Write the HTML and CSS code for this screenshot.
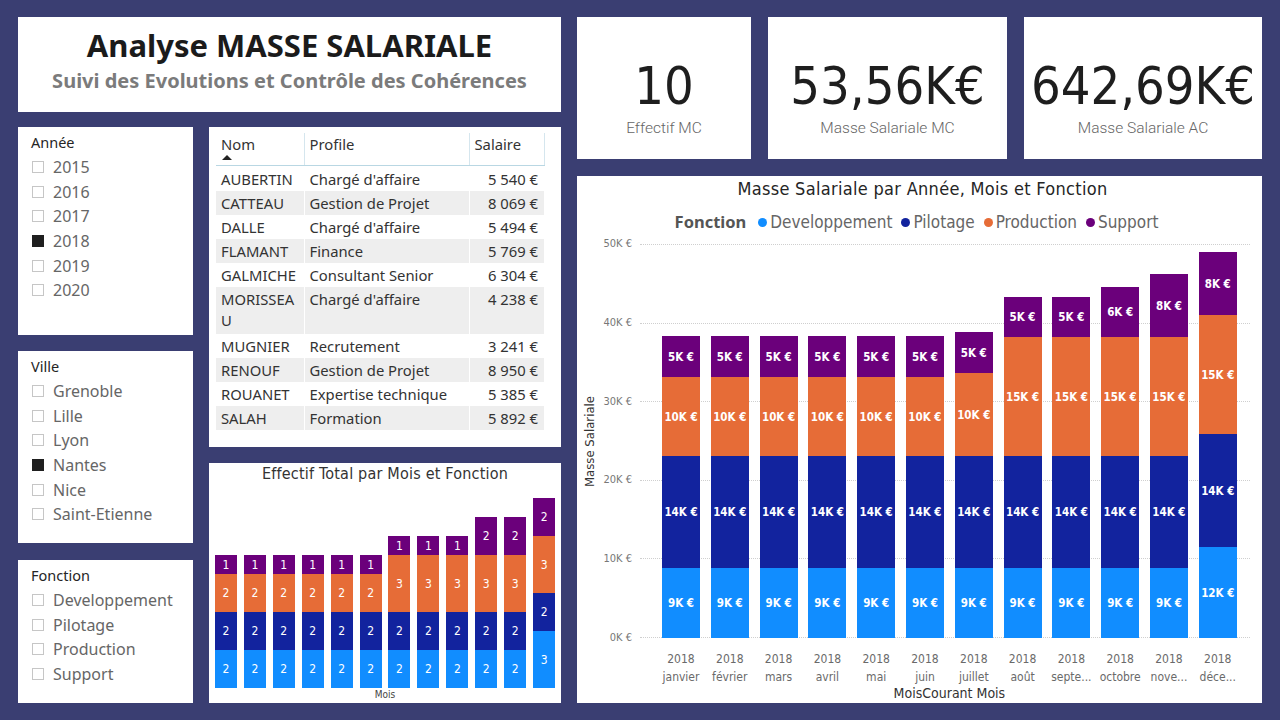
FILE: index.html
```html
<!DOCTYPE html>
<html lang="fr">
<head>
<meta charset="utf-8">
<title>Analyse MASSE SALARIALE</title>
<link rel="stylesheet" href="styles.css">
</head>
<body>
<div class="page">
  <div class="left">
    <div class="panel title-card">
      <h1 class="title">Analyse MASSE SALARIALE</h1>
      <div class="subtitle">Suivi des Evolutions et Contrôle des Cohérences</div>
    </div>
    <div class="lower">
      <div class="slicers">
        <div class="panel slicer slicer-annee">
          <div class="slicer-head">Année</div>
          <div class="item"><span class="box"></span>2015</div>
          <div class="item"><span class="box"></span>2016</div>
          <div class="item"><span class="box"></span>2017</div>
          <div class="item"><span class="box checked"></span>2018</div>
          <div class="item"><span class="box"></span>2019</div>
          <div class="item"><span class="box"></span>2020</div>
        </div>
        <div class="panel slicer slicer-ville">
          <div class="slicer-head">Ville</div>
          <div class="item"><span class="box"></span>Grenoble</div>
          <div class="item"><span class="box"></span>Lille</div>
          <div class="item"><span class="box"></span>Lyon</div>
          <div class="item"><span class="box checked"></span>Nantes</div>
          <div class="item"><span class="box"></span>Nice</div>
          <div class="item"><span class="box"></span>Saint-Etienne</div>
        </div>
        <div class="panel slicer slicer-fonction">
          <div class="slicer-head">Fonction</div>
          <div class="item"><span class="box"></span>Developpement</div>
          <div class="item"><span class="box"></span>Pilotage</div>
          <div class="item"><span class="box"></span>Production</div>
          <div class="item"><span class="box"></span>Support</div>
        </div>
      </div>
      <div class="center">
        <div class="panel table-card">
          <table class="tbl">
            <thead>
              <tr>
                <th class="c-nom">Nom<span class="sort"></span></th>
                <th class="c-prof">Profile</th>
                <th class="c-sal">Salaire</th>
              </tr>
            </thead>
            <tbody>
              <tr><td>AUBERTIN</td><td>Chargé d'affaire</td><td class="num">5 540 €</td></tr>
              <tr class="alt"><td>CATTEAU</td><td>Gestion de Projet</td><td class="num">8 069 €</td></tr>
              <tr><td>DALLE</td><td>Chargé d'affaire</td><td class="num">5 494 €</td></tr>
              <tr class="alt"><td>FLAMANT</td><td>Finance</td><td class="num">5 769 €</td></tr>
              <tr><td>GALMICHE</td><td>Consultant Senior</td><td class="num">6 304 €</td></tr>
              <tr class="alt tall"><td>MORISSEA<br>U</td><td>Chargé d'affaire</td><td class="num">4 238 €</td></tr>
              <tr><td>MUGNIER</td><td>Recrutement</td><td class="num">3 241 €</td></tr>
              <tr class="alt"><td>RENOUF</td><td>Gestion de Projet</td><td class="num">8 950 €</td></tr>
              <tr><td>ROUANET</td><td>Expertise technique</td><td class="num">5 385 €</td></tr>
              <tr class="alt"><td>SALAH</td><td>Formation</td><td class="num">5 892 €</td></tr>
            </tbody>
          </table>
        </div>
        <div class="panel small-chart">
          <div class="sc-title">Effectif Total par Mois et Fonction</div>
          <div class="sc-bars">
            <div class="sc-slot"><div class="sc-bar"><div class="seg sup" style="height:19px">1</div><div class="seg prod" style="height:38px">2</div><div class="seg pil" style="height:38px">2</div><div class="seg dev" style="height:38px">2</div></div></div>
            <div class="sc-slot"><div class="sc-bar"><div class="seg sup" style="height:19px">1</div><div class="seg prod" style="height:38px">2</div><div class="seg pil" style="height:38px">2</div><div class="seg dev" style="height:38px">2</div></div></div>
            <div class="sc-slot"><div class="sc-bar"><div class="seg sup" style="height:19px">1</div><div class="seg prod" style="height:38px">2</div><div class="seg pil" style="height:38px">2</div><div class="seg dev" style="height:38px">2</div></div></div>
            <div class="sc-slot"><div class="sc-bar"><div class="seg sup" style="height:19px">1</div><div class="seg prod" style="height:38px">2</div><div class="seg pil" style="height:38px">2</div><div class="seg dev" style="height:38px">2</div></div></div>
            <div class="sc-slot"><div class="sc-bar"><div class="seg sup" style="height:19px">1</div><div class="seg prod" style="height:38px">2</div><div class="seg pil" style="height:38px">2</div><div class="seg dev" style="height:38px">2</div></div></div>
            <div class="sc-slot"><div class="sc-bar"><div class="seg sup" style="height:19px">1</div><div class="seg prod" style="height:38px">2</div><div class="seg pil" style="height:38px">2</div><div class="seg dev" style="height:38px">2</div></div></div>
            <div class="sc-slot"><div class="sc-bar"><div class="seg sup" style="height:19px">1</div><div class="seg prod" style="height:57px">3</div><div class="seg pil" style="height:38px">2</div><div class="seg dev" style="height:38px">2</div></div></div>
            <div class="sc-slot"><div class="sc-bar"><div class="seg sup" style="height:19px">1</div><div class="seg prod" style="height:57px">3</div><div class="seg pil" style="height:38px">2</div><div class="seg dev" style="height:38px">2</div></div></div>
            <div class="sc-slot"><div class="sc-bar"><div class="seg sup" style="height:19px">1</div><div class="seg prod" style="height:57px">3</div><div class="seg pil" style="height:38px">2</div><div class="seg dev" style="height:38px">2</div></div></div>
            <div class="sc-slot"><div class="sc-bar"><div class="seg sup" style="height:38px">2</div><div class="seg prod" style="height:57px">3</div><div class="seg pil" style="height:38px">2</div><div class="seg dev" style="height:38px">2</div></div></div>
            <div class="sc-slot"><div class="sc-bar"><div class="seg sup" style="height:38px">2</div><div class="seg prod" style="height:57px">3</div><div class="seg pil" style="height:38px">2</div><div class="seg dev" style="height:38px">2</div></div></div>
            <div class="sc-slot"><div class="sc-bar"><div class="seg sup" style="height:38px">2</div><div class="seg prod" style="height:57px">3</div><div class="seg pil" style="height:38px">2</div><div class="seg dev" style="height:57px">3</div></div></div>
          </div>
          <div class="sc-axis">Mois</div>
        </div>
      </div>
    </div>
  </div>

  <div class="right">
    <div class="kpis">
      <div class="panel kpi kpi-1"><div class="kpi-value">10</div><div class="kpi-label">Effectif MC</div></div>
      <div class="panel kpi kpi-2"><div class="kpi-value">53,56K€</div><div class="kpi-label">Masse Salariale MC</div></div>
      <div class="panel kpi kpi-3"><div class="kpi-value">642,69K€</div><div class="kpi-label">Masse Salariale AC</div></div>
    </div>
    <div class="panel bigchart">
      <div class="bc-title">Masse Salariale par Année, Mois et Fonction</div>
      <div class="legend">
        <span class="legend-title">Fonction</span>
        <span class="lg"><span class="dot dev"></span>Developpement</span>
        <span class="lg"><span class="dot pil"></span>Pilotage</span>
        <span class="lg"><span class="dot prod"></span>Production</span>
        <span class="lg"><span class="dot sup"></span>Support</span>
      </div>
      <div class="bc-body">
        <div class="y-title"><span>Masse Salariale</span></div>
        <div class="y-labels">
          <span>50K €</span><span>40K €</span><span>30K €</span><span>20K €</span><span>10K €</span><span>0K €</span>
        </div>
        <div class="bc-main">
          <div class="plot">
            <div class="grid">
              <div class="gl"></div><div class="gl"></div><div class="gl"></div><div class="gl"></div><div class="gl"></div>
            </div>
            <div class="bars">
              <div class="slot"><div class="bar"><div class="seg sup" style="height:41px">5K €</div><div class="seg prod" style="height:79px">10K €</div><div class="seg pil" style="height:112px">14K €</div><div class="seg dev" style="height:70px">9K €</div></div></div>
              <div class="slot"><div class="bar"><div class="seg sup" style="height:41px">5K €</div><div class="seg prod" style="height:79px">10K €</div><div class="seg pil" style="height:112px">14K €</div><div class="seg dev" style="height:70px">9K €</div></div></div>
              <div class="slot"><div class="bar"><div class="seg sup" style="height:41px">5K €</div><div class="seg prod" style="height:79px">10K €</div><div class="seg pil" style="height:112px">14K €</div><div class="seg dev" style="height:70px">9K €</div></div></div>
              <div class="slot"><div class="bar"><div class="seg sup" style="height:41px">5K €</div><div class="seg prod" style="height:79px">10K €</div><div class="seg pil" style="height:112px">14K €</div><div class="seg dev" style="height:70px">9K €</div></div></div>
              <div class="slot"><div class="bar"><div class="seg sup" style="height:41px">5K €</div><div class="seg prod" style="height:79px">10K €</div><div class="seg pil" style="height:112px">14K €</div><div class="seg dev" style="height:70px">9K €</div></div></div>
              <div class="slot"><div class="bar"><div class="seg sup" style="height:41px">5K €</div><div class="seg prod" style="height:79px">10K €</div><div class="seg pil" style="height:112px">14K €</div><div class="seg dev" style="height:70px">9K €</div></div></div>
              <div class="slot"><div class="bar"><div class="seg sup" style="height:41px">5K €</div><div class="seg prod" style="height:83px">10K €</div><div class="seg pil" style="height:112px">14K €</div><div class="seg dev" style="height:70px">9K €</div></div></div>
              <div class="slot"><div class="bar"><div class="seg sup" style="height:40px">5K €</div><div class="seg prod" style="height:119px">15K €</div><div class="seg pil" style="height:112px">14K €</div><div class="seg dev" style="height:70px">9K €</div></div></div>
              <div class="slot"><div class="bar"><div class="seg sup" style="height:40px">5K €</div><div class="seg prod" style="height:119px">15K €</div><div class="seg pil" style="height:112px">14K €</div><div class="seg dev" style="height:70px">9K €</div></div></div>
              <div class="slot"><div class="bar"><div class="seg sup" style="height:50px">6K €</div><div class="seg prod" style="height:119px">15K €</div><div class="seg pil" style="height:112px">14K €</div><div class="seg dev" style="height:70px">9K €</div></div></div>
              <div class="slot"><div class="bar"><div class="seg sup" style="height:63px">8K €</div><div class="seg prod" style="height:119px">15K €</div><div class="seg pil" style="height:112px">14K €</div><div class="seg dev" style="height:70px">9K €</div></div></div>
              <div class="slot"><div class="bar"><div class="seg sup" style="height:63px">8K €</div><div class="seg prod" style="height:119px">15K €</div><div class="seg pil" style="height:113px">14K €</div><div class="seg dev" style="height:91px">12K €</div></div></div>
            </div>
          </div>
          <div class="x-labels">
            <div class="xl">2018<br>janvier</div>
            <div class="xl">2018<br>février</div>
            <div class="xl">2018<br>mars</div>
            <div class="xl">2018<br>avril</div>
            <div class="xl">2018<br>mai</div>
            <div class="xl">2018<br>juin</div>
            <div class="xl">2018<br>juillet</div>
            <div class="xl">2018<br>août</div>
            <div class="xl">2018<br>septe...</div>
            <div class="xl">2018<br>octobre</div>
            <div class="xl">2018<br>nove...</div>
            <div class="xl">2018<br>déce...</div>
          </div>
          <div class="x-title">MoisCourant Mois</div>
        </div>
      </div>
    </div>
  </div>
</div>
</body>
</html>
```
FILE: styles.css
```css
* { box-sizing: border-box; }

html, body {
  margin: 0;
  padding: 0;
}

body {
  width: 1280px;
  height: 720px;
  overflow: hidden;
  background: #3a3e72;
  font-family: "Noto Sans", "Open Sans", sans-serif;
  color: #333;
}

.page {
  display: flex;
  gap: 16px;
  padding: 17px 18px;
  height: 720px;
}

.panel {
  background: #ffffff;
}

/* ---------- left column ---------- */
.left {
  width: 543px;
  display: flex;
  flex-direction: column;
  gap: 15px;
}

.title-card {
  height: 95px;
  text-align: center;
  padding-top: 9px;
}

.title {
  margin: 0;
  font-size: 31px;
  line-height: 38px;
  font-weight: 700;
  color: #1b1b1b;
}

.subtitle {
  margin-top: 4px;
  font-size: 20px;
  line-height: 26px;
  font-weight: 700;
  color: #7b7b7b;
}

.lower {
  flex: 1;
  display: flex;
  gap: 16px;
}

.slicers {
  width: 175px;
  display: flex;
  flex-direction: column;
}

.slicer {
  padding: 5px 0 0 13px;
}

.slicer-annee { height: 208px; margin-bottom: 16px; }
.slicer-ville { height: 192px; margin-bottom: 17px; }
.slicer-fonction { height: 143px; }

.slicer-head {
  font-size: 14.5px;
  line-height: 20px;
  color: #252525;
  margin-bottom: 3px;
}

.item {
  display: flex;
  align-items: center;
  height: 24.6px;
  font-size: 16px;
  color: #666;
}

.box {
  width: 12px;
  height: 12px;
  border: 1.5px solid #c6c6c6;
  margin: 0 9px 0 1px;
  flex: none;
}

.box.checked {
  background: #1f1f1f;
  border-color: #1f1f1f;
}

.center {
  width: 352px;
  display: flex;
  flex-direction: column;
  gap: 16px;
}

/* ---------- table ---------- */
.table-card {
  height: 320px;
  padding: 6px 0 0 7px;
}

.tbl {
  border-collapse: collapse;
  width: 328px;
  table-layout: fixed;
  font-size: 14.8px;
  color: #333;
}

.tbl th {
  font-weight: 400;
  text-align: left;
  vertical-align: top;
  height: 32px;
  padding: 1px 0 0 5px;
  line-height: 21px;
  border-bottom: 1px solid #b9d7e3;
  border-left: 1px solid #d5e6ee;
}

.tbl th.c-nom { width: 88px; border-left: none; }
.tbl th.c-prof { width: 165px; }
.tbl th.c-sal { width: 75px; border-right: 1px solid #d5e6ee; }

.sort {
  display: block;
  width: 0;
  height: 0;
  margin: 0 0 0 1px;
  border-left: 5px solid transparent;
  border-right: 5px solid transparent;
  border-bottom: 5px solid #222;
}

.tbl tbody tr { height: 24px; }

.tbl td {
  height: 24px;
  padding: 0 0 0 5px;
  line-height: 24px;
  vertical-align: middle;
  white-space: nowrap;
  border-left: 1px solid #ffffff;
}

.tbl td:first-child { border-left: none; }

.tbl tbody tr:first-child { height: 25px; }
.tbl tbody tr:first-child td { height: 25px; padding-top: 1px; }

.tbl tr.alt td { background: #eeeeee; }

.tbl tr.tall { height: 47px; }

.tbl tr.tall td {
  height: 47px;
  line-height: 21px;
  vertical-align: top;
  padding-top: 2px;
}

.tbl td.num {
  text-align: right;
  padding-right: 6px;
}

/* ---------- small chart ---------- */
.small-chart {
  height: 240px;
  display: flex;
  flex-direction: column;
  padding: 0 2.5px;
  font-family: "DejaVu Sans Condensed", "DejaVu Sans", sans-serif;
  font-stretch: condensed;
}

.sc-title {
  text-align: center;
  font-size: 16px;
  line-height: 22px;
  letter-spacing: 0.2px;
  color: #333;
}

.sc-bars {
  flex: 1;
  display: flex;
  align-items: flex-end;
}

.sc-slot {
  flex: 1;
  display: flex;
  justify-content: center;
}

.sc-bar {
  width: 22px;
  display: flex;
  flex-direction: column;
}

.sc-axis {
  text-align: center;
  font-size: 10px;
  line-height: 13px;
  color: #444;
  margin-bottom: 2px;
}

.seg {
  display: flex;
  align-items: center;
  justify-content: center;
  color: #fff;
  font-weight: 700;
  font-size: 11.5px;
  white-space: nowrap;
}

.small-chart .seg { font-weight: 400; font-size: 12px; }

.seg.dev, .dot.dev { background: #118dff; }
.seg.pil, .dot.pil { background: #12239e; }
.seg.prod, .dot.prod { background: #e66c37; }
.seg.sup, .dot.sup { background: #6b007b; }

/* ---------- right column ---------- */
.right {
  width: 685px;
  display: flex;
  flex-direction: column;
  gap: 17px;
}

.kpis {
  height: 142px;
  display: flex;
  gap: 17px;
}

.kpi {
  text-align: center;
  padding-top: 40px;
}

.kpi-1 { width: 174px; }
.kpi-2 { width: 239px; }
.kpi-3 { width: 238px; }

.kpi-value {
  font-family: "DejaVu Sans Condensed", "DejaVu Sans", sans-serif;
  font-stretch: condensed;
  font-size: 52px;
  line-height: 58px;
  color: #1e1e1e;
}

.kpi-label {
  font-family: Roboto, "Noto Sans", sans-serif;
  font-weight: 300;
  font-size: 15.5px;
  line-height: 20px;
  color: #666;
  margin-top: 3px;
}

.bigchart {
  flex: 1;
  display: flex;
  flex-direction: column;
  padding: 1px 0 0 6px;
  font-family: "DejaVu Sans Condensed", "DejaVu Sans", sans-serif;
  font-stretch: condensed;
}

.bc-title {
  text-align: center;
  font-size: 18px;
  line-height: 23px;
  letter-spacing: 0.3px;
  color: #252525;
}

.legend {
  margin-top: 11px;
  display: flex;
  justify-content: center;
  align-items: center;
  gap: 9px;
  font-size: 17px;
  line-height: 22px;
  color: #666;
  padding-right: 12px;
}

.legend-title {
  font-family: "Noto Sans", "Open Sans", sans-serif;
  font-stretch: normal;
  font-weight: 700;
  font-size: 16.5px;
  color: #555;
  margin-right: 3px;
}

.lg {
  display: flex;
  align-items: center;
}

.dot {
  width: 9px;
  height: 9px;
  border-radius: 50%;
  margin-right: 3px;
}

.bc-body {
  margin-top: 11px;
  display: flex;
  align-items: flex-start;
}

.y-title {
  width: 14px;
  height: 394px;
  display: flex;
  align-items: center;
  justify-content: center;
}

.y-title span {
  transform: rotate(-90deg);
  white-space: nowrap;
  font-size: 13px;
  color: #333;
}

.y-labels {
  width: 35px;
  margin: -6px 8px 0 0;
  height: 406px;
  display: flex;
  flex-direction: column;
  justify-content: space-between;
  align-items: flex-end;
  font-size: 11px;
  line-height: 12px;
  color: #777;
}

.bc-main {
  width: 610px;
  display: flex;
  flex-direction: column;
}

.plot {
  position: relative;
  height: 394px;
}

.grid {
  height: 100%;
  display: flex;
  flex-direction: column;
  border-bottom: 1px dotted #cfcfcf;
}

.gl {
  flex: 1;
  border-top: 1px dotted #cfcfcf;
}

.bars {
  position: absolute;
  left: 16.6px;
  right: 7.8px;
  top: 0;
  bottom: 0;
  display: flex;
  align-items: flex-end;
}

.slot {
  flex: 1;
  display: flex;
  justify-content: center;
}

.bar {
  width: 38px;
  display: flex;
  flex-direction: column;
}

.x-labels {
  margin: 12px 7.8px 0 16.6px;
  display: flex;
}

.xl {
  flex: 1;
  text-align: center;
  font-size: 12px;
  line-height: 18px;
  color: #6a6a6a;
  white-space: nowrap;
}

.x-title {
  margin-left: 16.6px;
  margin-right: 7.8px;
  text-align: center;
  font-size: 14px;
  line-height: 14px;
  color: #333;
}
```
